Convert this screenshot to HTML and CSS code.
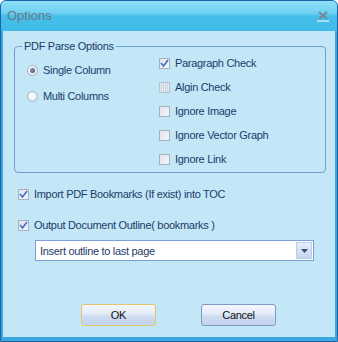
FILE: index.html
```html
<!DOCTYPE html>
<html lang="en">
<head>
    <meta charset="UTF-8">
    <title>Options</title>
    <link rel="stylesheet" href="styles.css">
</head>
<body>
    <div class="window">
        <div class="titlebar">
            <span class="title">Options</span>
            <svg class="close" width="12" height="11" viewBox="0 0 12 11">
                <path d="M2 1 L10 8 M10 1 L2 8" stroke="#7a8595" stroke-width="2"/>
                <path d="M0 10 H12" stroke="#ffffff" stroke-width="1"/>
            </svg>
        </div>
        <div class="content">
            <fieldset class="group">
                <legend>PDF Parse Options</legend>
                <div class="group-body">
                    <div class="radios">
                        <label class="row"><span class="radio on"></span>Single Column</label>
                        <label class="row"><span class="radio"></span>Multi Columns</label>
                    </div>
                    <div class="checks">
                        <label class="row"><span class="box checked"><svg width="9" height="9" viewBox="0 0 9 9"><path d="M1 4 L3.5 7 L8 1" stroke="#3b6fc4" stroke-width="1.6" fill="none"/></svg></span>Paragraph Check</label>
                        <label class="row"><span class="box disabled"></span>Algin Check</label>
                        <label class="row"><span class="box"></span>Ignore Image</label>
                        <label class="row"><span class="box"></span>Ignore Vector Graph</label>
                        <label class="row"><span class="box"></span>Ignore Link</label>
                    </div>
                </div>
            </fieldset>

            <label class="row option"><span class="box checked"><svg width="9" height="9" viewBox="0 0 9 9"><path d="M1 4 L3.5 7 L8 1" stroke="#3b6fc4" stroke-width="1.6" fill="none"/></svg></span>Import PDF Bookmarks (If exist) into TOC</label>
            <label class="row option"><span class="box checked"><svg width="9" height="9" viewBox="0 0 9 9"><path d="M1 4 L3.5 7 L8 1" stroke="#3b6fc4" stroke-width="1.6" fill="none"/></svg></span>Output Document Outline( bookmarks )</label>

            <div class="select">
                <span class="select-text">Insert outline to last page</span>
                <span class="select-btn"><svg width="7" height="4" viewBox="0 0 7 4"><path d="M0 0 H7 L3.5 4 Z" fill="#2f4f86"/></svg></span>
            </div>

            <div class="buttons">
                <button class="btn default">OK</button>
                <button class="btn">Cancel</button>
            </div>
        </div>
    </div>
</body>
</html>
```

FILE: styles.css
```css
body {
    margin: 0;
    font-family: "Liberation Sans", Arial, sans-serif;
    font-size: 11px;
    letter-spacing: -0.3px;
}

.window {
    width: 338px;
    height: 342px;
    box-sizing: border-box;
    display: flex;
    flex-direction: column;
    background: #3aa8de;
    border: 1px solid #1d62aa;
    border-radius: 6px 6px 0 0;
}

.titlebar {
    height: 28px;
    display: flex;
    align-items: center;
    justify-content: space-between;
    padding: 0 8px 2px 6px;
    background: linear-gradient(to bottom, #8fdff7 0%, #6fd1f1 40%, #45bfea 50%, #40bce8 100%);
    border-radius: 5px 5px 0 0;
}

.title {
    color: #6b7686;
    font-size: 13px;
    letter-spacing: 0;
}

.close {
    margin-top: 2px;
}

.content {
    flex: 1;
    margin: 0 2px 4px 2px;
    background: #c3e7f6;
    display: flex;
    flex-direction: column;
    color: #1c3b6b;
}

.group {
    margin: 9px 0 0 11px;
    width: 312px;
    box-sizing: border-box;
    padding: 0 0 3px 0;
    border: 1px solid #6f9ed6;
    border-radius: 4px;
    min-width: 0;
}

.group legend {
    margin-left: 7px;
    padding: 0 2px;
    line-height: 13px;
    color: #1c3b6b;
}

.group-body {
    display: flex;
}

.radios {
    width: 132px;
    padding: 7px 0 0 12px;
    display: flex;
    flex-direction: column;
    gap: 6px;
}

.checks {
    display: flex;
    flex-direction: column;
    gap: 4px;
}

.row {
    height: 20px;
    display: flex;
    align-items: center;
    gap: 5px;
    white-space: nowrap;
}

.radio {
    width: 11px;
    height: 11px;
    box-sizing: border-box;
    border-radius: 50%;
    border: 1px solid #a9b6c4;
    background: radial-gradient(circle at 40% 40%, #ffffff 0%, #e6ecf2 60%, #cfd8e2 100%);
    display: flex;
    align-items: center;
    justify-content: center;
}

.radio.on::after {
    content: "";
    width: 5px;
    height: 5px;
    border-radius: 50%;
    background: radial-gradient(circle at 40% 40%, #8a96a6 0%, #3f4b5c 100%);
}

.box {
    width: 11px;
    height: 11px;
    box-sizing: border-box;
    border: 1px solid #a4b2c2;
    background: linear-gradient(135deg, #dfe5ec 0%, #f4f6f9 100%);
    display: flex;
    align-items: center;
    justify-content: center;
}

.box.disabled {
    background: repeating-linear-gradient(90deg, #e4e8ee 0 1px, #cfd6de 1px 2px);
    border-color: #b7c2cf;
}

.option {
    margin-left: 15px;
}

.option:first-of-type {
    margin-top: 11px;
}

.option + .option {
    margin-top: 11px;
}

.select {
    margin: 5px 0 0 32px;
    width: 279px;
    height: 21px;
    box-sizing: border-box;
    border: 1px solid #7b9fd6;
    background: #ffffff;
    display: flex;
    align-items: center;
}

.select-text {
    flex: 1;
    padding-left: 4px;
    color: #1c3b6b;
}

.select-btn {
    width: 16px;
    height: 17px;
    margin-right: 1px;
    box-sizing: border-box;
    border: 1px solid #b9cdea;
    background: linear-gradient(to bottom, #e6eefa 0%, #d6e2f4 50%, #c6d6ee 100%);
    display: flex;
    align-items: center;
    justify-content: center;
}

.buttons {
    display: flex;
    gap: 45px;
    margin: 43px 0 0 78px;
}

.btn {
    width: 75px;
    height: 22px;
    font-family: "Liberation Sans", Arial, sans-serif;
    font-size: 11px;
    letter-spacing: -0.3px;
    color: #111111;
    border: 1px solid #7f99c4;
    border-radius: 3px;
    background: linear-gradient(to bottom, #f4f8fd 0%, #e3ebf8 45%, #cfdcf2 55%, #c4d4ee 100%);
    padding: 0;
}

.btn.default {
    border-color: #e7c56b;
}
```
